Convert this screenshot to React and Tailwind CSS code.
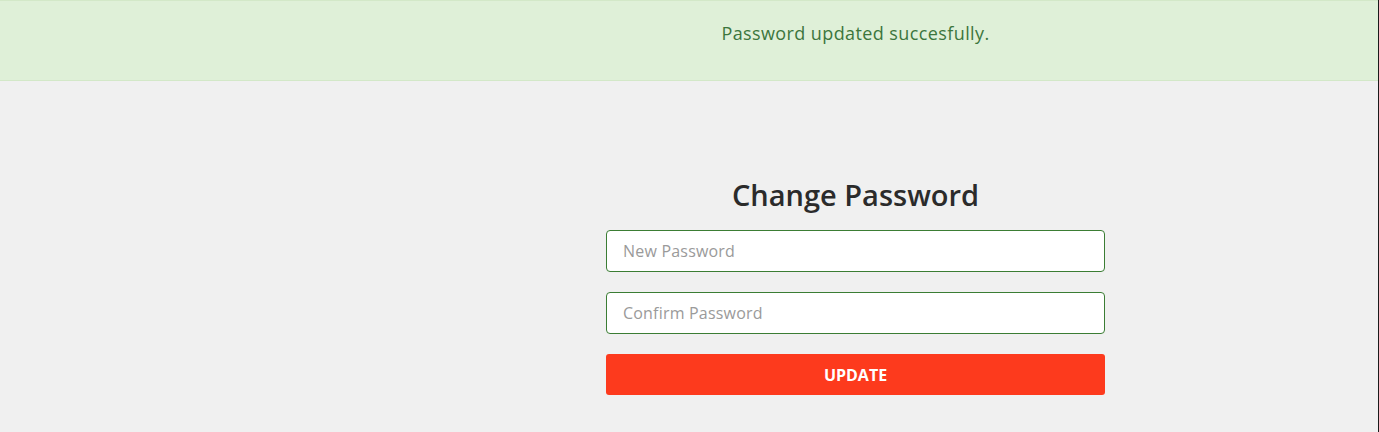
export default function App() {
  return (
    <div className="min-h-[432px] w-full bg-[#f0f0f0] border-r border-r-[#1a1a1a] font-['Open_Sans',sans-serif]">
      <div className="h-[81px] bg-[#dff0d8] border-y border-[#d3e8c8] flex items-center">
        <div className="ml-[333px] flex-1 text-center text-[18px] tracking-[0.4px] text-[#3c763d] pb-[14px]">
          Password updated succesfully.
        </div>
      </div>
      <div className="ml-[606px] w-[499px] pt-[94px] pb-[38px]">
        <h2 className="text-center text-[29px] font-semibold text-[#2b2b2b] leading-[40px] mb-[15px]">
          Change Password
        </h2>
        <form className="flex flex-col gap-[20px]">
          <input
            type="password"
            placeholder="New Password"
            className="h-[42px] w-full bg-white border border-[#3b7d34] rounded-[4px] px-[16px] text-[16px] tracking-[0.2px] text-[#333] placeholder:text-[#9a9a9a] outline-none"
          />
          <input
            type="password"
            placeholder="Confirm Password"
            className="h-[42px] w-full bg-white border border-[#3b7d34] rounded-[4px] px-[16px] text-[16px] tracking-[0.2px] text-[#333] placeholder:text-[#9a9a9a] outline-none"
          />
          <button
            type="button"
            className="h-[41px] w-full bg-[#fd3a1d] rounded-[3px] text-white font-bold text-[16px]"
          >
            UPDATE
          </button>
        </form>
      </div>
    </div>
  );
}
